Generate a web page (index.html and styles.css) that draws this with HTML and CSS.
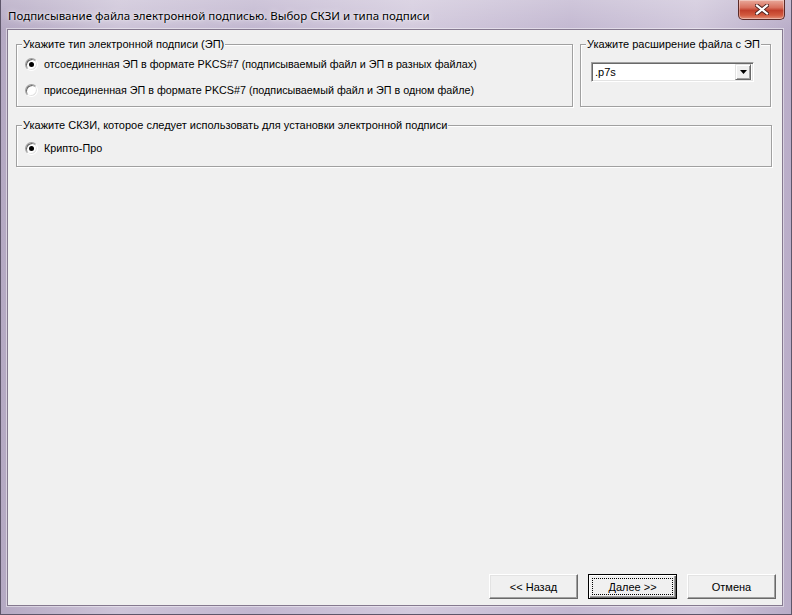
FILE: index.html
```html
<!DOCTYPE html>
<html lang="ru">
<head>
    <meta charset="UTF-8">
    <meta name="viewport" content="width=device-width, initial-scale=1.0">
    <title>Подписывание файла</title>
    <link rel="stylesheet" href="styles.css">
</head>
<body>
    <div class="window">
        <div class="titlebar">
            <span class="title">Подписывание файла электронной подписью. Выбор СКЗИ и типа подписи</span>
            <button class="close-btn" title="Закрыть">
                <svg width="14" height="11" viewBox="0 0 14 11">
                    <path d="M2 1.5 L12 9.5 M12 1.5 L2 9.5" stroke="#4a1f1c" stroke-width="4" stroke-linecap="square"/>
                    <path d="M2 1.5 L12 9.5 M12 1.5 L2 9.5" stroke="#fff" stroke-width="2.2" stroke-linecap="square"/>
                </svg>
            </button>
        </div>
        <div class="client">
            <div class="top-row">
                <div class="group group-type">
                    <div class="legend">Укажите тип электронной подписи (ЭП)</div>
                    <label class="radio-row first"><span class="radio checked"></span>отсоединенная ЭП в формате PKCS#7 (подписываемый файл и ЭП в разных файлах)</label>
                    <label class="radio-row second"><span class="radio"></span>присоединенная ЭП в формате PKCS#7 (подписываемый файл и ЭП в одном файле)</label>
                </div>
                <div class="group group-ext">
                    <div class="legend">Укажите расширение файла с ЭП</div>
                    <div class="combo">
                        <span class="combo-value">.p7s</span>
                        <span class="combo-btn">
                            <svg width="7" height="4" viewBox="0 0 7 4"><path d="M0 0 H7 L3.5 4 Z" fill="#000"/></svg>
                        </span>
                    </div>
                </div>
            </div>
            <div class="group group-csp">
                <div class="legend">Укажите СКЗИ, которое следует использовать для установки электронной подписи</div>
                <label class="radio-row first"><span class="radio checked"></span>Крипто-Про</label>
            </div>
            <div class="footer">
                <button class="btn">&lt;&lt; Назад</button>
                <button class="btn default"><span class="focus">Далее &gt;&gt;</span></button>
                <button class="btn">Отмена</button>
            </div>
        </div>
    </div>
</body>
</html>
```

FILE: styles.css
```css
body {
    margin: 0;
    width: 792px;
    height: 615px;
    overflow: hidden;
    font-family: 'Liberation Sans', Arial, sans-serif;
    font-size: 11px;
    color: #000;
}

.window {
    box-sizing: border-box;
    width: 792px;
    height: 615px;
    display: flex;
    flex-direction: column;
    padding: 0 8px 8px 6px;
    border: 1px solid #5e566a;
    border-top: none;
    background:
        linear-gradient(180deg, rgba(255, 255, 255, 0.2), rgba(255, 255, 255, 0) 30px),
        linear-gradient(90deg, #b5a9c3 0%, #cdc4d8 15%, #c2b7d0 32%, #d3cadd 52%, #c3b8d1 72%, #d0c7db 88%, #b9adc8 100%);
}

.titlebar {
    height: 29px;
    display: flex;
    align-items: center;
    justify-content: space-between;
    flex-shrink: 0;
}

.title {
    padding-left: 1px;
    font-family: 'Noto Sans', 'Open Sans', sans-serif;
    font-size: 11.5px;
    color: #000;
    text-shadow: 0 0 6px rgba(255, 255, 255, 0.9), 0 0 2px rgba(255, 255, 255, 0.8);
    margin-top: 1px;
}

.close-btn {
    align-self: flex-start;
    width: 47px;
    height: 20px;
    margin-right: -2px;
    padding: 0;
    border: 1px solid #5b2a27;
    border-top: none;
    border-radius: 0 0 5px 5px;
    background: linear-gradient(180deg, #e9a99b 0%, #d8705d 40%, #c13f2b 55%, #d25a3f 80%, #e3907a 100%);
    box-shadow: inset 0 0 0 1px rgba(255, 255, 255, 0.35);
    display: flex;
    align-items: center;
    justify-content: center;
}

.client {
    flex: 1;
    display: flex;
    flex-direction: column;
    background: #f0f0f0;
    border: 1px solid #85798f;
    box-shadow: 0 0 0 1px rgba(255, 255, 255, 0.45);
    padding: 14px 6px 6px 8px;
}

.top-row {
    display: flex;
    gap: 7px;
}

.group {
    box-sizing: border-box;
    border: 1px solid #a0a0a0;
    box-shadow: inset 1px 1px 0 #fff, 1px 1px 0 #fff;
}

.group-type {
    width: 557px;
    height: 63px;
}

.group-ext {
    width: 191px;
    height: 63px;
}

.group-csp {
    width: 756px;
    height: 42px;
    margin-top: 18px;
}

.legend {
    width: fit-content;
    margin: -7px 0 0 5px;
    padding: 0 1px;
    line-height: 13px;
    background: #f0f0f0;
    white-space: nowrap;
}

.radio-row {
    display: flex;
    align-items: center;
    gap: 6px;
    height: 14px;
    line-height: 14px;
    padding-left: 8px;
    font-size: 10.75px;
    white-space: nowrap;
}

.radio-row.first {
    margin-top: 6px;
}

.group-csp .radio-row.first {
    margin-top: 9px;
}

.radio-row.second {
    margin-top: 12px;
}

.radio {
    box-sizing: border-box;
    position: relative;
    width: 13px;
    height: 13px;
    flex-shrink: 0;
    border-radius: 50%;
    background: #fff;
    border: 1px solid;
    border-color: #a0a0a0 #fff #fff #a0a0a0;
    box-shadow: inset 1px 1px 0 #696969, inset -1px -1px 0 #e3e3e3;
}

.radio.checked::after {
    content: '';
    position: absolute;
    left: 3px;
    top: 3px;
    width: 5px;
    height: 5px;
    border-radius: 50%;
    background: #000;
}

.combo {
    box-sizing: border-box;
    width: 163px;
    height: 20px;
    margin: 11px 0 0 10px;
    display: flex;
    align-items: center;
    justify-content: space-between;
    background: #fff;
    border: 1px solid;
    border-color: #a0a0a0 #fff #fff #a0a0a0;
    box-shadow: inset 1px 1px 0 #696969, inset -1px -1px 0 #e3e3e3;
    padding: 2px 2px 2px 3px;
}

.combo-btn {
    box-sizing: border-box;
    width: 16px;
    height: 16px;
    display: flex;
    align-items: center;
    justify-content: center;
    background: #f0f0f0;
    border: 1px solid;
    border-color: #e3e3e3 #696969 #696969 #e3e3e3;
    box-shadow: inset 1px 1px 0 #fff, inset -1px -1px 0 #a0a0a0;
}

.footer {
    margin-top: auto;
    display: flex;
    justify-content: flex-end;
    gap: 10px;
}

.btn {
    box-sizing: border-box;
    width: 89px;
    height: 25px;
    padding: 0;
    font-family: 'Liberation Sans', Arial, sans-serif;
    font-size: 11px;
    color: #000;
    background: #f0f0f0;
    border: 1px solid;
    border-color: #fff #696969 #696969 #fff;
    box-shadow: inset -1px -1px 0 #a0a0a0, inset 1px 1px 0 #e3e3e3;
}

.btn.default {
    border: 1px solid #000;
    box-shadow: inset 1px 1px 0 #fff, inset -1px -1px 0 #696969, inset -2px -2px 0 #a0a0a0;
    display: flex;
    padding: 3px;
}

.focus {
    flex: 1;
    display: flex;
    align-items: center;
    justify-content: center;
    border: 1px dotted #000;
}
```
